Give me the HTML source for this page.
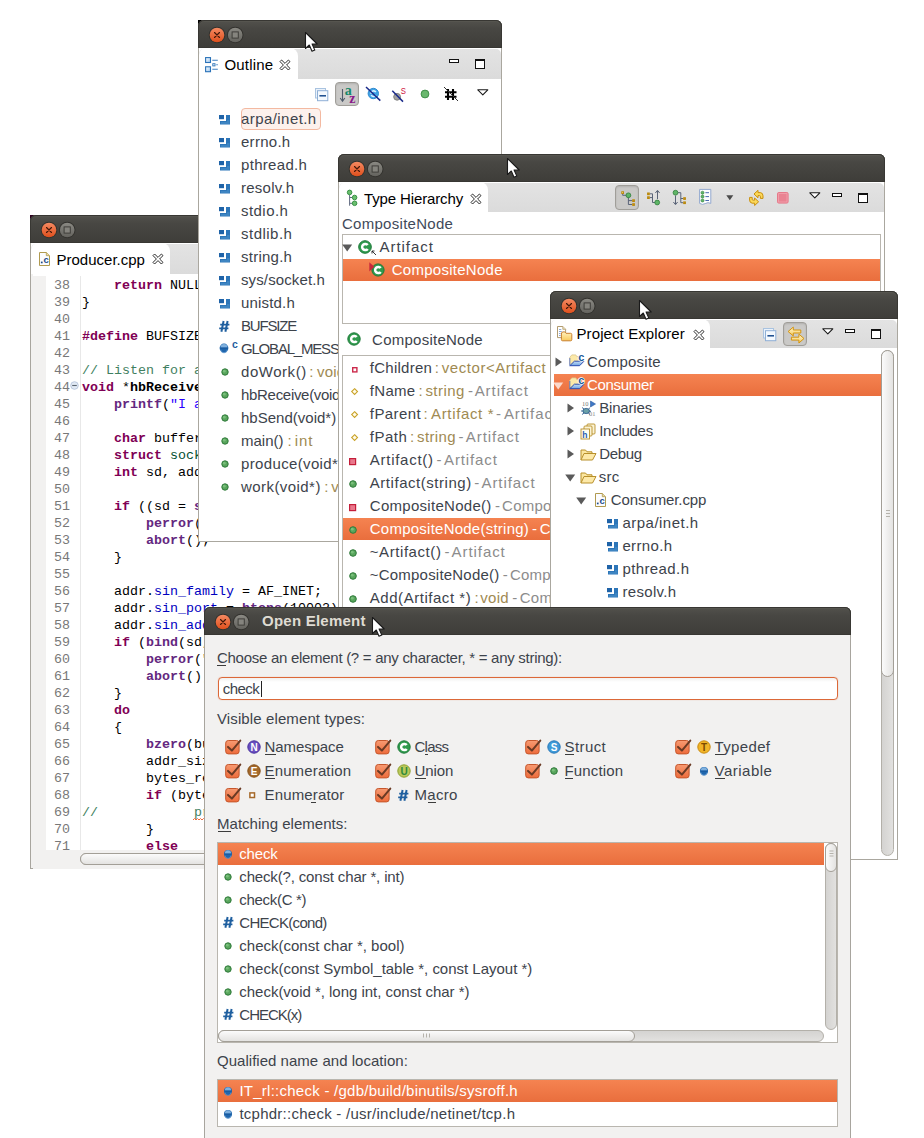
<!DOCTYPE html>
<html><head><meta charset="utf-8"><title>Eclipse CDT views</title><style>
html,body{margin:0;padding:0;background:#fff;}
body{width:924px;height:1138px;position:relative;overflow:hidden;font-family:"Liberation Sans", sans-serif;}
.win{position:absolute;overflow:hidden;}
.win span{position:absolute;white-space:pre;line-height:20px;height:20px;}
.win .ln{left:24px;width:16px;color:#787878;font-family:"Liberation Mono", monospace;font-size:13.33px;line-height:17px;height:17px;text-align:right;}
.win .cl{left:52px;color:#000;font-family:"Liberation Mono", monospace;font-size:13.33px;line-height:17px;height:17px;}
.win .cl b{font-family:"Liberation Mono", monospace;}
svg{display:block;overflow:visible;}
</style></head><body>
<div class="win" style="left:30px;top:215px;width:480px;height:654px;background:#fff;"><div style="position:absolute;left:0px;top:0px;width:6px;height:6px;background:#2c001e;"></div>
<div style="position:absolute;left:0px;top:0px;width:480px;height:28px;background:linear-gradient(#53524d,#484743 30%,#3e3d39);border-radius:6px 6px 0 0;box-shadow:inset 0 0 0 1px #383733, inset 0 2px 0 #56554f;"></div>
<svg style="position:absolute;left:10.4px;top:5.6px;" width="37" height="18" viewBox="0 0 37 18"><defs><linearGradient id="gc" x1="0" y1="0" x2="0" y2="1"><stop offset="0" stop-color="#f58a62"/><stop offset="1" stop-color="#df4f1c"/></linearGradient><linearGradient id="gm" x1="0" y1="0" x2="0" y2="1"><stop offset="0" stop-color="#8a8983"/><stop offset="1" stop-color="#64635e"/></linearGradient></defs><circle cx="9" cy="9" r="8.3" fill="#33322e"/><circle cx="9" cy="9" r="7.3" fill="url(#gc)"/><path d="M6.5 6.5 L11.5 11.5 M11.5 6.5 L6.5 11.5" stroke="#42180a" stroke-width="1.15" stroke-linecap="round"/><circle cx="27.2" cy="9" r="8.3" fill="#33322e"/><circle cx="27.2" cy="9" r="7.3" fill="url(#gm)"/><rect x="24.1" y="5.9" width="6.2" height="6.2" fill="#85847e" stroke="#3f3e3a" stroke-width="1"/></svg>
<div style="position:absolute;left:0px;top:28px;width:480px;height:626px;background:#f2f1f0;border:1px solid #a8a59e;border-top:none;box-sizing:border-box;"></div>
<div style="position:absolute;left:1px;top:28px;width:478px;height:31px;background:#fff;"></div>
<div style="position:absolute;left:1px;top:29px;width:478px;height:30px;background:linear-gradient(#e3e3e3,#dbdbdb);border-radius:5px 5px 0 0;"></div>
<div style="position:absolute;left:1px;top:28px;width:139px;height:31px;background:#fff;border-radius:7px 8px 0 0;"></div>
<svg style="position:absolute;left:9px;top:36.5px;" width="11" height="14" viewBox="0 0 11 14"><path d="M0.5 0.5 H7.3 L10.5 3.7 V13.5 H0.5 Z" fill="#fbfcff" stroke="#b09a50" stroke-width="1"/><path d="M7.3 0.5 V3.7 H10.5" fill="#e9d9a0" stroke="#b09a50" stroke-width=".8"/><text x="4.6" y="11.3" font-family='"Liberation Sans",sans-serif' font-weight="bold" font-size="9.5" fill="#1a4a8a">c</text><rect x="1.9" y="9.6" width="1.7" height="1.7" fill="#1a4a8a"/></svg>
<span style="left:26.50px;top:35.00px;color:#000;font-size:15px;letter-spacing:0.001px;">Producer.cpp</span>
<svg style="position:absolute;left:122.2px;top:38px;" width="12" height="12" viewBox="0 0 12 12"><path d="M1 2.6 L2.6 1 L6 4.4 L9.4 1 L11 2.6 L7.6 6 L11 9.4 L9.4 11 L6 7.6 L2.6 11 L1 9.4 L4.4 6 Z" fill="#fff" stroke="#2b2b2b" stroke-width="1" stroke-linejoin="round"/></svg>
<div style="position:absolute;left:3px;top:59px;width:475px;height:576px;background:#fff;"></div>
<div style="position:absolute;left:3px;top:61px;width:13px;height:574px;background:#f2f1f0;"></div>
<div style="position:absolute;left:49.5px;top:61px;width:1px;height:574px;background:#e8e8e8;"></div>
<span class="ln" style="top:61.6px">38</span><span class="cl" style="top:61.6px">    <b style="color:#7f0055;font-weight:bold">return</b><b style="color:#000;font-weight:normal"> NULL;</b></span>
<span class="ln" style="top:78.6px">39</span><span class="cl" style="top:78.6px"><b style="color:#000;font-weight:normal">}</b></span>
<span class="ln" style="top:95.6px">40</span><span class="cl" style="top:95.6px"></span>
<span class="ln" style="top:112.6px">41</span><span class="cl" style="top:112.6px"><b style="color:#7f0055;font-weight:bold">#define</b><b style="color:#000;font-weight:normal"> BUFSIZE 1024</b></span>
<span class="ln" style="top:129.6px">42</span><span class="cl" style="top:129.6px"></span>
<span class="ln" style="top:146.6px">43</span><span class="cl" style="top:146.6px"><b style="color:#3f7f5f;font-weight:normal">// Listen for a heartbeat from the consumer</b></span>
<span class="ln" style="top:163.6px">44</span><span class="cl" style="top:163.6px"><b style="color:#7f0055;font-weight:bold">void</b><b style="color:#000;font-weight:normal"> *</b><b style="color:#000;font-weight:bold">hbReceive</b><b style="color:#000;font-weight:normal">(void *arg) {</b></span>
<span class="ln" style="top:180.6px">45</span><span class="cl" style="top:180.6px">    <b style="color:#642880;font-weight:bold">printf</b><b style="color:#000;font-weight:normal">(</b><b style="color:#2a00ff;font-weight:normal">&quot;I am listening&quot;</b></span>
<span class="ln" style="top:197.6px">46</span><span class="cl" style="top:197.6px"></span>
<span class="ln" style="top:214.6px">47</span><span class="cl" style="top:214.6px">    <b style="color:#7f0055;font-weight:bold">char</b><b style="color:#000;font-weight:normal"> buffer[BUFSIZE];</b></span>
<span class="ln" style="top:231.6px">48</span><span class="cl" style="top:231.6px">    <b style="color:#7f0055;font-weight:bold">struct</b> <b style="color:#005032;font-weight:normal">sockaddr_in</b><b style="color:#000;font-weight:normal"> addr;</b></span>
<span class="ln" style="top:248.6px">49</span><span class="cl" style="top:248.6px">    <b style="color:#7f0055;font-weight:bold">int</b><b style="color:#000;font-weight:normal"> sd, addr_size, bytes_read;</b></span>
<span class="ln" style="top:265.6px">50</span><span class="cl" style="top:265.6px"></span>
<span class="ln" style="top:282.6px">51</span><span class="cl" style="top:282.6px">    <b style="color:#7f0055;font-weight:bold">if</b><b style="color:#000;font-weight:normal"> ((sd = </b><b style="color:#642880;font-weight:bold">socket</b><b style="color:#000;font-weight:normal">(PF_INET</b></span>
<span class="ln" style="top:299.6px">52</span><span class="cl" style="top:299.6px">        <b style="color:#642880;font-weight:bold">perror</b><b style="color:#000;font-weight:normal">(&quot;Socket&quot;);</b></span>
<span class="ln" style="top:316.6px">53</span><span class="cl" style="top:316.6px">        <b style="color:#642880;font-weight:bold">abort</b><b style="color:#000;font-weight:normal">();</b></span>
<span class="ln" style="top:333.6px">54</span><span class="cl" style="top:333.6px"><b style="color:#000;font-weight:normal">    }</b></span>
<span class="ln" style="top:350.6px">55</span><span class="cl" style="top:350.6px"></span>
<span class="ln" style="top:367.6px">56</span><span class="cl" style="top:367.6px"><b style="color:#000;font-weight:normal">    addr.</b><b style="color:#0000c0;font-weight:normal">sin_family</b><b style="color:#000;font-weight:normal"> = AF_INET;</b></span>
<span class="ln" style="top:384.6px">57</span><span class="cl" style="top:384.6px"><b style="color:#000;font-weight:normal">    addr.</b><b style="color:#0000c0;font-weight:normal">sin_port</b><b style="color:#000;font-weight:normal"> = </b><b style="color:#642880;font-weight:bold">htons</b><b style="color:#000;font-weight:normal">(10002);</b></span>
<span class="ln" style="top:401.6px">58</span><span class="cl" style="top:401.6px"><b style="color:#000;font-weight:normal">    addr.</b><b style="color:#0000c0;font-weight:normal">sin_addr</b><b style="color:#000;font-weight:normal">.s_addr = INADDR_ANY;</b></span>
<span class="ln" style="top:418.6px">59</span><span class="cl" style="top:418.6px">    <b style="color:#7f0055;font-weight:bold">if</b><b style="color:#000;font-weight:normal"> (</b><b style="color:#642880;font-weight:bold">bind</b><b style="color:#000;font-weight:normal">(sd, (struct</b></span>
<span class="ln" style="top:435.6px">60</span><span class="cl" style="top:435.6px">        <b style="color:#642880;font-weight:bold">perror</b><b style="color:#000;font-weight:normal">(&quot;Bind&quot;);</b></span>
<span class="ln" style="top:452.6px">61</span><span class="cl" style="top:452.6px">        <b style="color:#642880;font-weight:bold">abort</b><b style="color:#000;font-weight:normal">();</b></span>
<span class="ln" style="top:469.6px">62</span><span class="cl" style="top:469.6px"><b style="color:#000;font-weight:normal">    }</b></span>
<span class="ln" style="top:486.6px">63</span><span class="cl" style="top:486.6px">    <b style="color:#7f0055;font-weight:bold">do</b></span>
<span class="ln" style="top:503.6px">64</span><span class="cl" style="top:503.6px"><b style="color:#000;font-weight:normal">    {</b></span>
<span class="ln" style="top:520.6px">65</span><span class="cl" style="top:520.6px">        <b style="color:#642880;font-weight:bold">bzero</b><b style="color:#000;font-weight:normal">(buffer, BUFSIZE);</b></span>
<span class="ln" style="top:537.6px">66</span><span class="cl" style="top:537.6px"><b style="color:#000;font-weight:normal">        addr_size = sizeof(addr);</b></span>
<span class="ln" style="top:554.6px">67</span><span class="cl" style="top:554.6px"><b style="color:#000;font-weight:normal">        bytes_read = recvfrom</b></span>
<span class="ln" style="top:571.6px">68</span><span class="cl" style="top:571.6px">        <b style="color:#7f0055;font-weight:bold">if</b><b style="color:#000;font-weight:normal"> (bytes_read &gt; 0) {</b></span>
<span class="ln" style="top:588.6px">69</span><span class="cl" style="top:588.6px"><b style="color:#3f7f5f;font-weight:normal">//            printf</b></span>
<span class="ln" style="top:605.6px">70</span><span class="cl" style="top:605.6px"><b style="color:#000;font-weight:normal">        }</b></span>
<span class="ln" style="top:622.6px">71</span><span class="cl" style="top:622.6px">        <b style="color:#7f0055;font-weight:bold">else</b></span>
<svg style="position:absolute;left:40px;top:165.9px;" width="9" height="9" viewBox="0 0 9 9"><circle cx="4.5" cy="4.5" r="3.8" fill="#e1e9f4" stroke="#bccadf" stroke-width="1"/><path d="M2.2 4.5 H6.8" stroke="#5a6470" stroke-width="1.1"/></svg>
<svg style="position:absolute;left:163px;top:603px;" width="12" height="3" viewBox="0 0 12 3"><path d="M0 2 L1.5 0.5 L3 2 L4.5 0.5 L6 2 L7.5 0.5 L9 2 L10.5 0.5 L12 2" fill="none" stroke="#ef6a3a" stroke-width="1"/></svg>
<div style="position:absolute;left:3px;top:634.5px;width:475px;height:19px;background:#f2f1f0;"></div>
<div style="position:absolute;left:50px;top:638px;width:420px;height:12px;background:linear-gradient(#d4d3d1,#e2e1df);border:1px solid #b3b0a9;border-radius:7px;box-sizing:border-box;"></div>
<div style="position:absolute;left:50px;top:638px;width:300px;height:12px;background:linear-gradient(#fbfbfb,#e4e3e1);border:1px solid #a39f97;border-radius:7px;box-sizing:border-box;"></div></div>
<div class="win" style="left:198px;top:20px;width:304px;height:522px;background:#fff;"><div style="position:absolute;left:0px;top:0px;width:6px;height:6px;background:#000;"></div>
<div style="position:absolute;left:0px;top:0px;width:304px;height:28px;background:linear-gradient(#53524d,#484743 30%,#3e3d39);border-radius:6px 6px 0 0;box-shadow:inset 0 0 0 1px #383733, inset 0 2px 0 #56554f;"></div>
<svg style="position:absolute;left:10.4px;top:5.6px;" width="37" height="18" viewBox="0 0 37 18"><defs><linearGradient id="gc" x1="0" y1="0" x2="0" y2="1"><stop offset="0" stop-color="#f58a62"/><stop offset="1" stop-color="#df4f1c"/></linearGradient><linearGradient id="gm" x1="0" y1="0" x2="0" y2="1"><stop offset="0" stop-color="#8a8983"/><stop offset="1" stop-color="#64635e"/></linearGradient></defs><circle cx="9" cy="9" r="8.3" fill="#33322e"/><circle cx="9" cy="9" r="7.3" fill="url(#gc)"/><path d="M6.5 6.5 L11.5 11.5 M11.5 6.5 L6.5 11.5" stroke="#42180a" stroke-width="1.15" stroke-linecap="round"/><circle cx="27.2" cy="9" r="8.3" fill="#33322e"/><circle cx="27.2" cy="9" r="7.3" fill="url(#gm)"/><rect x="24.1" y="5.9" width="6.2" height="6.2" fill="#85847e" stroke="#3f3e3a" stroke-width="1"/></svg>
<div style="position:absolute;left:0px;top:28px;width:304px;height:494px;background:#fff;border:1px solid #aaa79f;border-top:none;box-sizing:border-box;"></div>
<div style="position:absolute;left:1px;top:28px;width:301.5px;height:30.5px;background:#fff;"></div>
<div style="position:absolute;left:1px;top:29px;width:301.5px;height:29.5px;background:linear-gradient(#e3e3e3,#dbdbdb);border-radius:5px 5px 0 0;"></div>
<div style="position:absolute;left:1px;top:28px;width:98.5px;height:30.5px;background:#fff;border-radius:7px 8px 0 0;"></div>
<svg style="position:absolute;left:105.6px;top:10.8px;" width="16" height="23" viewBox="0 0 16 23"><path d="M1.5 1.5 L1.5 17.5 L5.3 14 L8 20.3 L10.8 19.1 L8.1 13 L13.2 13 Z" fill="#fff" stroke="#1a1a1a" stroke-width="1.1" stroke-linejoin="round"/></svg>
<svg style="position:absolute;left:7px;top:37px;" width="13" height="15" viewBox="0 0 13 15"><defs><linearGradient id="ob" x1="0" y1="0" x2="1" y2="1"><stop offset="0" stop-color="#fff"/><stop offset="1" stop-color="#9cc6ee"/></linearGradient></defs><rect x="0.6" y="0.6" width="4.9" height="4.9" fill="url(#ob)" stroke="#2a72b8" stroke-width="1.1"/><rect x="0.6" y="9.8" width="4.9" height="4.9" fill="url(#ob)" stroke="#2a72b8" stroke-width="1.1"/><rect x="7.8" y="6.7" width="2.2" height="2.2" fill="#fff" stroke="#2a72b8" stroke-width=".9"/><path d="M7.3 3.2 H12.8 M11.3 7.8 H12.8 M7.3 12.3 H12.8" stroke="#3f7fc0" stroke-width="1.1"/></svg>
<span style="left:26.50px;top:34.60px;color:#000;font-size:15px;letter-spacing:0.161px;">Outline</span>
<svg style="position:absolute;left:81px;top:38.5px;" width="12" height="12" viewBox="0 0 12 12"><path d="M1 2.6 L2.6 1 L6 4.4 L9.4 1 L11 2.6 L7.6 6 L11 9.4 L9.4 11 L6 7.6 L2.6 11 L1 9.4 L4.4 6 Z" fill="#fff" stroke="#2b2b2b" stroke-width="1" stroke-linejoin="round"/></svg>
<div style="position:absolute;left:251px;top:39px;width:10px;height:4px;background:#fff;border:1px solid #111;box-sizing:border-box;"></div>
<div style="position:absolute;left:277px;top:39px;width:10px;height:10px;background:#fff;border:1px solid #111;border-top-width:2px;box-sizing:border-box;"></div>
<svg style="position:absolute;left:117px;top:68px;" width="14" height="14" viewBox="0 0 14 14"><rect x="0.5" y="0.5" width="10" height="9.5" fill="#eaf2fb" stroke="#a9c3e0"/><rect x="2.5" y="2.7" width="10.3" height="10" fill="#f4f9fe" stroke="#8fb0d6"/><path d="M4.4 7.8 H11" stroke="#17498c" stroke-width="1.5"/></svg>
<div style="position:absolute;left:137px;top:62px;width:24px;height:24px;background:#cac9c7;border:1px solid #a09e99;border-radius:4px;box-sizing:border-box;box-shadow:inset 0 1px 2px rgba(0,0,0,.12);"></div>
<svg style="position:absolute;left:141px;top:65px;" width="18" height="18" viewBox="0 0 18 18"><path d="M3.5 4 V16 M1.2 13 L3.5 16.2 L5.8 13" fill="none" stroke="#4f5b6b" stroke-width="1.1"/><text x="5.8" y="9.6" font-family='"Liberation Serif",serif' font-weight="bold" font-size="14" fill="#15876a">a</text><text x="10.2" y="17.7" font-family='"Liberation Serif",serif' font-weight="bold" font-size="14" fill="#8a1a8a">z</text></svg>
<svg style="position:absolute;left:167px;top:66px;" width="17" height="16" viewBox="0 0 17 16"><circle cx="8.3" cy="7.5" r="5.2" fill="#3fa2e4" stroke="#2f8ad0"/><path d="M6 7.8 A2.6 2.6 0 0 1 10.8 6.2 M10.8 9 A2.6 2.6 0 0 1 6.2 9.2" fill="none" stroke="#d8eeff" stroke-width="1.6"/><path d="M1 1 L15.3 14.6" stroke="#1a2a8a" stroke-width="1.5"/></svg>
<svg style="position:absolute;left:193px;top:64px;" width="17" height="19" viewBox="0 0 17 19"><circle cx="6.1" cy="12.8" r="3.4" fill="#a2a2a2" stroke="#808080"/><path d="M1.3 6.8 L12 17.6" stroke="#1a2a8a" stroke-width="1.5"/><text x="12" y="9.6" transform="scale(.82 1)" font-family='"Liberation Sans",sans-serif' font-size="9.5" fill="#d0103a">S</text></svg>
<svg style="position:absolute;left:221px;top:68px;" width="12" height="12" viewBox="0 0 12 12"><circle cx="6" cy="6" r="3.9" fill="#6ab86e" stroke="#3f8f48" stroke-width="1"/></svg>
<svg style="position:absolute;left:245px;top:66px;" width="16" height="16" viewBox="0 0 16 16"><path d="M5 3 V14 M10 3 V14 M2 6.2 H13.5 M2 10.8 H13.5" stroke="#000" stroke-width="2.1"/><path d="M1 1 L15 15" stroke="#333" stroke-width="1"/></svg>
<svg style="position:absolute;left:279px;top:68.5px;" width="12" height="7" viewBox="0 0 12 7"><path d="M0.8 0.8 L10.8 0.8 L5.8 5.8 Z" fill="#fff" stroke="#1a1a1a" stroke-width="1.1" stroke-linejoin="round"/></svg>
<div style="position:absolute;left:42.5px;top:87.5px;width:80.5px;height:22.5px;background:#fdf1ec;border:1px solid #f3b9a1;border-radius:4px;box-sizing:border-box;"></div>
<svg style="position:absolute;left:21.2px;top:94.5px;" width="11" height="10" viewBox="0 0 11 10"><rect x="0" y="0" width="5" height="4.2" fill="#1f63a8"/><path d="M7 0 H11 V9.6 H1 V6 H7 Z" fill="#2d76b9"/><path d="M8 5 H10.5 V9 H2 V7 H8Z" fill="#4f93cc" opacity=".5"/></svg>
<span style="left:43.00px;top:88.50px;color:#3d434b;font-size:15px;letter-spacing:0.431px;">arpa/inet.h</span>
<svg style="position:absolute;left:21.2px;top:117.5px;" width="11" height="10" viewBox="0 0 11 10"><rect x="0" y="0" width="5" height="4.2" fill="#1f63a8"/><path d="M7 0 H11 V9.6 H1 V6 H7 Z" fill="#2d76b9"/><path d="M8 5 H10.5 V9 H2 V7 H8Z" fill="#4f93cc" opacity=".5"/></svg>
<span style="left:43.00px;top:111.50px;color:#3d434b;font-size:15px;letter-spacing:0.278px;">errno.h</span>
<svg style="position:absolute;left:21.2px;top:140.5px;" width="11" height="10" viewBox="0 0 11 10"><rect x="0" y="0" width="5" height="4.2" fill="#1f63a8"/><path d="M7 0 H11 V9.6 H1 V6 H7 Z" fill="#2d76b9"/><path d="M8 5 H10.5 V9 H2 V7 H8Z" fill="#4f93cc" opacity=".5"/></svg>
<span style="left:43.00px;top:134.50px;color:#3d434b;font-size:15px;letter-spacing:0.314px;">pthread.h</span>
<svg style="position:absolute;left:21.2px;top:163.5px;" width="11" height="10" viewBox="0 0 11 10"><rect x="0" y="0" width="5" height="4.2" fill="#1f63a8"/><path d="M7 0 H11 V9.6 H1 V6 H7 Z" fill="#2d76b9"/><path d="M8 5 H10.5 V9 H2 V7 H8Z" fill="#4f93cc" opacity=".5"/></svg>
<span style="left:43.00px;top:157.50px;color:#3d434b;font-size:15px;letter-spacing:0.254px;">resolv.h</span>
<svg style="position:absolute;left:21.2px;top:186.5px;" width="11" height="10" viewBox="0 0 11 10"><rect x="0" y="0" width="5" height="4.2" fill="#1f63a8"/><path d="M7 0 H11 V9.6 H1 V6 H7 Z" fill="#2d76b9"/><path d="M8 5 H10.5 V9 H2 V7 H8Z" fill="#4f93cc" opacity=".5"/></svg>
<span style="left:43.00px;top:180.50px;color:#3d434b;font-size:15px;letter-spacing:0.449px;">stdio.h</span>
<svg style="position:absolute;left:21.2px;top:209.5px;" width="11" height="10" viewBox="0 0 11 10"><rect x="0" y="0" width="5" height="4.2" fill="#1f63a8"/><path d="M7 0 H11 V9.6 H1 V6 H7 Z" fill="#2d76b9"/><path d="M8 5 H10.5 V9 H2 V7 H8Z" fill="#4f93cc" opacity=".5"/></svg>
<span style="left:43.00px;top:203.50px;color:#3d434b;font-size:15px;letter-spacing:0.481px;">stdlib.h</span>
<svg style="position:absolute;left:21.2px;top:232.5px;" width="11" height="10" viewBox="0 0 11 10"><rect x="0" y="0" width="5" height="4.2" fill="#1f63a8"/><path d="M7 0 H11 V9.6 H1 V6 H7 Z" fill="#2d76b9"/><path d="M8 5 H10.5 V9 H2 V7 H8Z" fill="#4f93cc" opacity=".5"/></svg>
<span style="left:43.00px;top:226.50px;color:#3d434b;font-size:15px;letter-spacing:0.242px;">string.h</span>
<svg style="position:absolute;left:21.2px;top:255.5px;" width="11" height="10" viewBox="0 0 11 10"><rect x="0" y="0" width="5" height="4.2" fill="#1f63a8"/><path d="M7 0 H11 V9.6 H1 V6 H7 Z" fill="#2d76b9"/><path d="M8 5 H10.5 V9 H2 V7 H8Z" fill="#4f93cc" opacity=".5"/></svg>
<span style="left:43.00px;top:249.50px;color:#3d434b;font-size:15px;letter-spacing:0.115px;">sys/socket.h</span>
<svg style="position:absolute;left:21.2px;top:278.5px;" width="11" height="10" viewBox="0 0 11 10"><rect x="0" y="0" width="5" height="4.2" fill="#1f63a8"/><path d="M7 0 H11 V9.6 H1 V6 H7 Z" fill="#2d76b9"/><path d="M8 5 H10.5 V9 H2 V7 H8Z" fill="#4f93cc" opacity=".5"/></svg>
<span style="left:43.00px;top:272.50px;color:#3d434b;font-size:15px;letter-spacing:0.179px;">unistd.h</span>
<svg style="position:absolute;left:21px;top:301.4px;" width="11" height="11" viewBox="0 0 11 11"><path d="M4.6 0 L2.4 10.8 M8.6 0 L6.4 10.8" stroke="#1f5f9f" stroke-width="2"/><path d="M1.2 3.7 H10.4 M0.2 7.3 H9.4" stroke="#1f5f9f" stroke-width="1.8"/></svg>
<span style="left:43.00px;top:295.50px;color:#3d434b;font-size:15px;letter-spacing:-1.200px;">BUFSIZE</span>
<svg style="position:absolute;left:20.6px;top:323.4px;" width="10" height="10" viewBox="0 0 10 10"><circle cx="5" cy="5" r="4.4" fill="#1f66ad"/><path d="M1.4999999999999996 4.4 A3.5000000000000004 3.5000000000000004 0 0 1 8.5 4.4 Z" fill="#7fb0de"/><path d="M1.1999999999999997 5.2 H8.8" stroke="#1a5a9e" stroke-width="1.1"/><path d="M1.7999999999999996 6.6 A3.2 3.2 0 0 0 8.200000000000001 6.6" fill="none" stroke="#4f8cc8" stroke-width=".9"/></svg>
<span style="left:34.10px;top:313.76px;color:#1f5f9f;font-size:10.5px;font-weight:bold;">c</span>
<span style="left:43.00px;top:318.50px;color:#3d434b;font-size:15px;letter-spacing:-1.200px;">GLOBAL_MESSAGE</span>
<svg style="position:absolute;left:21.5px;top:347.3px;" width="10" height="10" viewBox="0 0 10 10"><circle cx="5" cy="5" r="3.2" fill="#58a55c" stroke="#2f7a3a" stroke-width="1"/><circle cx="4.3" cy="4.2" r="1.4" fill="#8fd08f" opacity=".6"/></svg>
<span style="left:43.00px;top:341.50px;color:#3d434b;font-size:15px;letter-spacing:0.542px;">doWork()</span>
<span style="left:111.20px;top:341.50px;color:#a08a52;font-size:15px;letter-spacing:-0.672px;">:</span>
<span style="left:119.00px;top:341.50px;color:#a08a52;font-size:15px;letter-spacing:0.223px;">void</span>
<svg style="position:absolute;left:21.5px;top:370.3px;" width="10" height="10" viewBox="0 0 10 10"><circle cx="5" cy="5" r="3.2" fill="#58a55c" stroke="#2f7a3a" stroke-width="1"/><circle cx="4.3" cy="4.2" r="1.4" fill="#8fd08f" opacity=".6"/></svg>
<span style="left:43.00px;top:364.50px;color:#3d434b;font-size:15px;letter-spacing:-0.302px;">hbReceive(void*)</span>
<svg style="position:absolute;left:21.5px;top:393.3px;" width="10" height="10" viewBox="0 0 10 10"><circle cx="5" cy="5" r="3.2" fill="#58a55c" stroke="#2f7a3a" stroke-width="1"/><circle cx="4.3" cy="4.2" r="1.4" fill="#8fd08f" opacity=".6"/></svg>
<span style="left:43.00px;top:387.50px;color:#3d434b;font-size:15px;letter-spacing:0.011px;">hbSend(void*)</span>
<svg style="position:absolute;left:21.5px;top:416.3px;" width="10" height="10" viewBox="0 0 10 10"><circle cx="5" cy="5" r="3.2" fill="#58a55c" stroke="#2f7a3a" stroke-width="1"/><circle cx="4.3" cy="4.2" r="1.4" fill="#8fd08f" opacity=".6"/></svg>
<span style="left:43.00px;top:410.50px;color:#3d434b;font-size:15px;letter-spacing:0.017px;">main()</span>
<span style="left:89.50px;top:410.50px;color:#a08a52;font-size:15px;letter-spacing:-0.772px;">:</span>
<span style="left:96.80px;top:410.50px;color:#a08a52;font-size:15px;letter-spacing:0.878px;">int</span>
<svg style="position:absolute;left:21.5px;top:439.3px;" width="10" height="10" viewBox="0 0 10 10"><circle cx="5" cy="5" r="3.2" fill="#58a55c" stroke="#2f7a3a" stroke-width="1"/><circle cx="4.3" cy="4.2" r="1.4" fill="#8fd08f" opacity=".6"/></svg>
<span style="left:43.00px;top:433.50px;color:#3d434b;font-size:15px;letter-spacing:0.357px;">produce(void*)</span>
<svg style="position:absolute;left:21.5px;top:462.3px;" width="10" height="10" viewBox="0 0 10 10"><circle cx="5" cy="5" r="3.2" fill="#58a55c" stroke="#2f7a3a" stroke-width="1"/><circle cx="4.3" cy="4.2" r="1.4" fill="#8fd08f" opacity=".6"/></svg>
<span style="left:43.00px;top:456.50px;color:#3d434b;font-size:15px;letter-spacing:0.438px;">work(void*)</span>
<span style="left:126.20px;top:456.50px;color:#a08a52;font-size:15px;letter-spacing:-0.772px;">:</span>
<span style="left:133.20px;top:456.50px;color:#a08a52;font-size:15px;letter-spacing:0.223px;">void</span></div>
<div class="win" style="left:338px;top:154px;width:547px;height:520px;background:#fff;"><div style="position:absolute;left:0px;top:0px;width:547px;height:28px;background:linear-gradient(#53524d,#484743 30%,#3e3d39);border-radius:6px 6px 0 0;box-shadow:inset 0 0 0 1px #383733, inset 0 2px 0 #56554f;"></div>
<svg style="position:absolute;left:10.4px;top:5.6px;" width="37" height="18" viewBox="0 0 37 18"><defs><linearGradient id="gc" x1="0" y1="0" x2="0" y2="1"><stop offset="0" stop-color="#f58a62"/><stop offset="1" stop-color="#df4f1c"/></linearGradient><linearGradient id="gm" x1="0" y1="0" x2="0" y2="1"><stop offset="0" stop-color="#8a8983"/><stop offset="1" stop-color="#64635e"/></linearGradient></defs><circle cx="9" cy="9" r="8.3" fill="#33322e"/><circle cx="9" cy="9" r="7.3" fill="url(#gc)"/><path d="M6.5 6.5 L11.5 11.5 M11.5 6.5 L6.5 11.5" stroke="#42180a" stroke-width="1.15" stroke-linecap="round"/><circle cx="27.2" cy="9" r="8.3" fill="#33322e"/><circle cx="27.2" cy="9" r="7.3" fill="url(#gm)"/><rect x="24.1" y="5.9" width="6.2" height="6.2" fill="#85847e" stroke="#3f3e3a" stroke-width="1"/></svg>
<div style="position:absolute;left:0px;top:28px;width:547px;height:492px;background:#fff;border:1px solid #aaa79f;border-top:none;box-sizing:border-box;"></div>
<div style="position:absolute;left:1px;top:28px;width:544.5px;height:30px;background:#fff;"></div>
<div style="position:absolute;left:1px;top:29px;width:544.5px;height:29px;background:linear-gradient(#e3e3e3,#dbdbdb);border-radius:5px 5px 0 0;"></div>
<div style="position:absolute;left:1px;top:28px;width:148.5px;height:30px;background:#fff;border-radius:7px 8px 0 0;"></div>
<svg style="position:absolute;left:167.7px;top:2.7px;" width="16" height="23" viewBox="0 0 16 23"><path d="M1.5 1.5 L1.5 17.5 L5.3 14 L8 20.3 L10.8 19.1 L8.1 13 L13.2 13 Z" fill="#fff" stroke="#1a1a1a" stroke-width="1.1" stroke-linejoin="round"/></svg>
<svg style="position:absolute;left:8px;top:35px;" width="12" height="18" viewBox="0 0 12 18"><path d="M3.6 5.5 V16.7 M3.6 8.5 H6.5 M3.6 14.3 H6.5" stroke="#606a80" stroke-width="1" fill="none"/><circle cx="3.6" cy="3.4" r="2.3" fill="#6abf6e" stroke="#2e8a3c" stroke-width=".9"/><circle cx="8.6" cy="8.5" r="2.3" fill="#6abf6e" stroke="#2e8a3c" stroke-width=".9"/><circle cx="8.6" cy="14.3" r="2.3" fill="#6abf6e" stroke="#2e8a3c" stroke-width=".9"/></svg>
<span style="left:26.00px;top:34.90px;color:#000;font-size:15px;letter-spacing:-0.129px;">Type Hierarchy</span>
<svg style="position:absolute;left:132px;top:38.5px;" width="12" height="12" viewBox="0 0 12 12"><path d="M1 2.6 L2.6 1 L6 4.4 L9.4 1 L11 2.6 L7.6 6 L11 9.4 L9.4 11 L6 7.6 L2.6 11 L1 9.4 L4.4 6 Z" fill="#fff" stroke="#2b2b2b" stroke-width="1" stroke-linejoin="round"/></svg>
<div style="position:absolute;left:277px;top:31px;width:24px;height:24.5px;background:#cac9c7;border:1px solid #a09e99;border-radius:4px;box-sizing:border-box;box-shadow:inset 0 1px 2px rgba(0,0,0,.12);"></div>
<svg style="position:absolute;left:282px;top:35px;" width="17" height="18" viewBox="0 0 17 18"><path d="M2.7 4.9 V6.3 H8.4 M8.4 8 V15.5 H12.2 M8.4 11.6 H12.2" fill="none" stroke="#5a6478" stroke-width="1"/><rect x="1.75" y="2.75" width="1.8" height="1.8" fill="#ffe680" stroke="#b8860b" stroke-width=".9"/><circle cx="8.4" cy="6.3" r="2.4" fill="#5fb567" stroke="#2e7d3a" stroke-width=".8"/><rect x="12.649999999999999" y="10.75" width="1.8" height="1.8" fill="#ffe680" stroke="#b8860b" stroke-width=".9"/><rect x="12.649999999999999" y="14.649999999999999" width="1.8" height="1.8" fill="#ffe680" stroke="#b8860b" stroke-width=".9"/></svg>
<svg style="position:absolute;left:308px;top:35px;" width="16" height="18" viewBox="0 0 16 18"><path d="M3.9 4.8 H6.5 V13.5 H9 M3.9 8.6 H6.5" fill="none" stroke="#5a6478" stroke-width="1"/><path d="M11.5 2 V10 M9.4 4 L11.5 1.3 L13.6 4" fill="none" stroke="#5a6478" stroke-width="1"/><rect x="1.55" y="3.95" width="1.8" height="1.8" fill="#ffe680" stroke="#b8860b" stroke-width=".9"/><rect x="1.55" y="7.75" width="1.8" height="1.8" fill="#ffe680" stroke="#b8860b" stroke-width=".9"/><circle cx="11.2" cy="13.5" r="2.4" fill="#5fb567" stroke="#2e7d3a" stroke-width=".8"/></svg>
<svg style="position:absolute;left:333px;top:35px;" width="16" height="18" viewBox="0 0 16 18"><path d="M4.5 6.5 V15 M2.4 13 L4.5 15.7 L6.6 13" fill="none" stroke="#5a6478" stroke-width="1"/><path d="M7 3.7 H9.8 V13.7 H12.2 M9.8 9.5 H12.2" fill="none" stroke="#5a6478" stroke-width="1"/><circle cx="4.5" cy="3.7" r="2.4" fill="#5fb567" stroke="#2e7d3a" stroke-width=".8"/><rect x="12.649999999999999" y="8.649999999999999" width="1.8" height="1.8" fill="#ffe680" stroke="#b8860b" stroke-width=".9"/><rect x="12.649999999999999" y="12.85" width="1.8" height="1.8" fill="#ffe680" stroke="#b8860b" stroke-width=".9"/></svg>
<svg style="position:absolute;left:361px;top:34px;" width="13" height="18" viewBox="0 0 13 18"><path d="M0.6 1.4 H11.8 V15.4 Q9 13.8 6.2 15.6 Q3.4 17.3 0.6 15.4 Z" fill="#fdfdff" stroke="#93a9cf" stroke-width="1"/><circle cx="3.5" cy="4.7" r="1.5" fill="#5fb567" stroke="#2e7d3a" stroke-width=".6"/><path d="M6.4 4.7 H10" stroke="#4a6ab0" stroke-width="1"/><circle cx="3.5" cy="8.6" r="1.5" fill="#5fb567" stroke="#2e7d3a" stroke-width=".6"/><path d="M6.4 8.6 H10" stroke="#4a6ab0" stroke-width="1"/><circle cx="3.5" cy="12.5" r="1.5" fill="#5fb567" stroke="#2e7d3a" stroke-width=".6"/><path d="M6.4 12.5 H10" stroke="#4a6ab0" stroke-width="1"/></svg>
<svg style="position:absolute;left:387.5px;top:40.5px;" width="8" height="6" viewBox="0 0 8 6"><path d="M0.3 0.3 L7.3 0.3 L3.8 5.3 Z" fill="#4b4b4b"/></svg>
<svg style="position:absolute;left:410px;top:34.5px;" width="17" height="18" viewBox="0 0 17 18"><path d="M6 5 L10 1.3 L10 3.6 L12.4 3.6 Q15 4 15 6.8 L15 9.4 L12.4 9.4 L12.4 7.4 Q12.4 6.6 11.4 6.6 L10 6.6 L10 8.8 Z" fill="#fbd85a" stroke="#c9900f" stroke-width="1" stroke-linejoin="round"/><path d="M6 5 L10 1.3 L10 3.6 L12.4 3.6 Q15 4 15 6.8 L15 9.4 L12.4 9.4 L12.4 7.4 Q12.4 6.6 11.4 6.6 L10 6.6 L10 8.8 Z" transform="rotate(180 8.3 8.9)" fill="#fbd85a" stroke="#c9900f" stroke-width="1" stroke-linejoin="round"/></svg>
<svg style="position:absolute;left:439px;top:37.7px;" width="12" height="12" viewBox="0 0 12 12"><rect x="0.5" y="0.5" width="10.6" height="10.6" rx="1.3" fill="#e98392" stroke="#e6798a"/><rect x="1.6" y="1.6" width="8.4" height="8.4" fill="none" stroke="#f2a4af" stroke-width=".8"/></svg>
<svg style="position:absolute;left:470.5px;top:37.5px;" width="12" height="7" viewBox="0 0 12 7"><path d="M0.8 0.8 L10.8 0.8 L5.8 5.8 Z" fill="#fff" stroke="#1a1a1a" stroke-width="1.1" stroke-linejoin="round"/></svg>
<div style="position:absolute;left:494px;top:39px;width:10px;height:4px;background:#fff;border:1px solid #111;box-sizing:border-box;"></div>
<div style="position:absolute;left:520px;top:39px;width:10px;height:10px;background:#fff;border:1px solid #111;border-top-width:2px;box-sizing:border-box;"></div>
<span style="left:4.00px;top:59.60px;color:#3f4a5a;font-size:15px;letter-spacing:0.278px;">CompositeNode</span>
<div style="position:absolute;left:4px;top:80px;width:539px;height:90px;background:#fff;border:1px solid #b9b6af;box-sizing:border-box;"></div>
<svg style="position:absolute;left:4.3px;top:89.5px;" width="11" height="8" viewBox="0 0 11 8"><path d="M0.2 0.4 L10.2 0.4 L5.2 7.5 Z" fill="#5a5a5a"/></svg>
<svg style="position:absolute;left:19.4px;top:84.8px;" width="16" height="16" viewBox="0 0 16 16"><circle cx="8" cy="8" r="6.3" fill="#2f9a4d" stroke="#1f7a3a" stroke-width="1"/><path d="M10.7 6.1 A3.1 3.1 0 1 0 10.7 9.9" fill="none" stroke="#fff" stroke-width="2.5"/></svg>
<svg style="position:absolute;left:33px;top:96px;" width="6" height="6" viewBox="0 0 6 6"><path d="M1 1 L5 5 M1 1 V3.5 M1 1 H3.5" stroke="#222" stroke-width=".9" fill="none"/></svg>
<span style="left:41.60px;top:82.90px;color:#3d434b;font-size:15px;letter-spacing:0.945px;">Artifact</span>
<div style="position:absolute;left:5px;top:105px;width:537px;height:22px;background:linear-gradient(#f58351,#e96e3d);"></div>
<svg style="position:absolute;left:32px;top:107.9px;" width="16" height="16" viewBox="0 0 16 16"><circle cx="8" cy="8" r="6.1" fill="#2f9a4d" stroke="#1f7a3a" stroke-width="1"/><path d="M10.7 6.1 A3.1 3.1 0 1 0 10.7 9.9" fill="none" stroke="#fff" stroke-width="2.5"/></svg>
<svg style="position:absolute;left:31px;top:108px;" width="7" height="10" viewBox="0 0 7 10"><path d="M0.3 0.2 L5.4 4.8 L0.3 9.4 Z" fill="#c8283c"/></svg>
<span style="left:53.70px;top:105.90px;color:#fff;font-size:15px;letter-spacing:0.270px;">CompositeNode</span>
<svg style="position:absolute;left:7.6px;top:176.5px;" width="16" height="16" viewBox="0 0 16 16"><circle cx="8" cy="8" r="6.2" fill="#2f9a4d" stroke="#1f7a3a" stroke-width="1"/><path d="M10.7 6.1 A3.1 3.1 0 1 0 10.7 9.9" fill="none" stroke="#fff" stroke-width="2.5"/></svg>
<span style="left:34.10px;top:176.00px;color:#3d434b;font-size:15px;letter-spacing:0.245px;">CompositeNode</span>
<div style="position:absolute;left:4px;top:200.5px;width:539px;height:300px;background:#fff;border:1px solid #b9b6af;box-sizing:border-box;"></div>
<svg style="position:absolute;left:13.6px;top:212.8px;" width="6" height="6" viewBox="0 0 6 6"><rect x="0.7" y="0.7" width="4.2" height="4.2" fill="#fff" stroke="#cc2a4c" stroke-width="1.4"/></svg>
<span style="left:31.80px;top:203.90px;color:#3d434b;font-size:15px;letter-spacing:0.259px;">fChildren</span>
<span style="left:96.80px;top:203.90px;color:#a08a52;font-size:15px;letter-spacing:-0.872px;">:</span>
<span style="left:103.80px;top:203.90px;color:#a08a52;font-size:15px;letter-spacing:0.549px;">vector&lt;Artifact *&gt;</span>
<svg style="position:absolute;left:13px;top:233.9px;" width="8" height="8" viewBox="0 0 8 8"><path d="M3.6 0.7 L6.5 3.6 L3.6 6.5 L0.7 3.6 Z" fill="#fffbe8" stroke="#c9a227" stroke-width="1.1"/></svg>
<span style="left:31.80px;top:226.90px;color:#3d434b;font-size:15px;letter-spacing:0.303px;">fName</span>
<span style="left:80.60px;top:226.90px;color:#a08a52;font-size:15px;letter-spacing:-0.872px;">:</span>
<span style="left:87.40px;top:226.90px;color:#a08a52;font-size:15px;letter-spacing:0.462px;">string</span>
<span style="left:130.00px;top:226.90px;color:#8c8c8c;font-size:15px;letter-spacing:-0.800px;">-</span>
<span style="left:136.70px;top:226.90px;color:#8c8c8c;font-size:15px;letter-spacing:0.930px;">Artifact</span>
<svg style="position:absolute;left:13px;top:256.9px;" width="8" height="8" viewBox="0 0 8 8"><path d="M3.6 0.7 L6.5 3.6 L3.6 6.5 L0.7 3.6 Z" fill="#fffbe8" stroke="#c9a227" stroke-width="1.1"/></svg>
<span style="left:31.80px;top:249.90px;color:#3d434b;font-size:15px;letter-spacing:0.421px;">fParent</span>
<span style="left:85.60px;top:249.90px;color:#a08a52;font-size:15px;letter-spacing:-0.872px;">:</span>
<span style="left:93.00px;top:249.90px;color:#a08a52;font-size:15px;letter-spacing:0.657px;">Artifact *</span>
<span style="left:158.00px;top:249.90px;color:#8c8c8c;font-size:15px;letter-spacing:0.000px;">-</span>
<span style="left:165.90px;top:249.90px;color:#8c8c8c;font-size:15px;letter-spacing:0.916px;">Artifact</span>
<svg style="position:absolute;left:13px;top:279.9px;" width="8" height="8" viewBox="0 0 8 8"><path d="M3.6 0.7 L6.5 3.6 L3.6 6.5 L0.7 3.6 Z" fill="#fffbe8" stroke="#c9a227" stroke-width="1.1"/></svg>
<span style="left:31.80px;top:272.90px;color:#3d434b;font-size:15px;letter-spacing:0.492px;">fPath</span>
<span style="left:72.10px;top:272.90px;color:#a08a52;font-size:15px;letter-spacing:-0.872px;">:</span>
<span style="left:79.10px;top:272.90px;color:#a08a52;font-size:15px;letter-spacing:0.342px;">string</span>
<span style="left:120.60px;top:272.90px;color:#8c8c8c;font-size:15px;letter-spacing:-0.300px;">-</span>
<span style="left:127.80px;top:272.90px;color:#8c8c8c;font-size:15px;letter-spacing:0.916px;">Artifact</span>
<svg style="position:absolute;left:11px;top:303.8px;" width="8" height="8" viewBox="0 0 8 8"><rect x="0.6" y="0.6" width="6" height="6" fill="#e9788c" stroke="#c41e3a" stroke-width="1.2"/></svg>
<span style="left:31.80px;top:295.90px;color:#3d434b;font-size:15px;letter-spacing:0.725px;">Artifact()</span>
<span style="left:98.60px;top:295.90px;color:#8c8c8c;font-size:15px;letter-spacing:-0.300px;">-</span>
<span style="left:106.00px;top:295.90px;color:#8c8c8c;font-size:15px;letter-spacing:0.887px;">Artifact</span>
<svg style="position:absolute;left:10.3px;top:325px;" width="10" height="10" viewBox="0 0 10 10"><circle cx="5" cy="5" r="3.3" fill="#58a55c" stroke="#2f7a3a" stroke-width="1"/><circle cx="4.3" cy="4.2" r="1.4" fill="#8fd08f" opacity=".6"/></svg>
<span style="left:31.80px;top:318.90px;color:#3d434b;font-size:15px;letter-spacing:0.536px;">Artifact(string)</span>
<span style="left:136.30px;top:318.90px;color:#8c8c8c;font-size:15px;letter-spacing:-0.300px;">-</span>
<span style="left:143.50px;top:318.90px;color:#8c8c8c;font-size:15px;letter-spacing:0.916px;">Artifact</span>
<svg style="position:absolute;left:11px;top:349.8px;" width="8" height="8" viewBox="0 0 8 8"><rect x="0.6" y="0.6" width="6" height="6" fill="#e9788c" stroke="#c41e3a" stroke-width="1.2"/></svg>
<span style="left:31.80px;top:341.90px;color:#3d434b;font-size:15px;letter-spacing:0.282px;">CompositeNode()</span>
<span style="left:156.90px;top:341.90px;color:#8c8c8c;font-size:15px;letter-spacing:-0.300px;">-</span>
<span style="left:164.10px;top:341.90px;color:#8c8c8c;font-size:15px;letter-spacing:0.211px;">CompositeNode</span>
<div style="position:absolute;left:5px;top:364px;width:537px;height:21.8px;background:linear-gradient(#f58351,#e96e3d);"></div>
<svg style="position:absolute;left:10.3px;top:371px;" width="10" height="10" viewBox="0 0 10 10"><circle cx="5" cy="5" r="3.3" fill="#58a55c" stroke="#2f7a3a" stroke-width="1"/><circle cx="4.3" cy="4.2" r="1.4" fill="#8fd08f" opacity=".6"/></svg>
<span style="left:31.80px;top:364.90px;color:#fff;font-size:15px;letter-spacing:0.238px;">CompositeNode(string)</span>
<span style="left:193.90px;top:364.90px;color:#fff;font-size:15px;letter-spacing:-0.100px;">-</span>
<span style="left:201.70px;top:364.90px;color:#fff;font-size:15px;letter-spacing:0.245px;">CompositeNode</span>
<svg style="position:absolute;left:10.3px;top:394px;" width="10" height="10" viewBox="0 0 10 10"><circle cx="5" cy="5" r="3.3" fill="#58a55c" stroke="#2f7a3a" stroke-width="1"/><circle cx="4.3" cy="4.2" r="1.4" fill="#8fd08f" opacity=".6"/></svg>
<span style="left:31.80px;top:387.90px;color:#3d434b;font-size:15px;letter-spacing:0.566px;">~Artifact()</span>
<span style="left:106.50px;top:387.90px;color:#8c8c8c;font-size:15px;letter-spacing:-0.300px;">-</span>
<span style="left:113.60px;top:387.90px;color:#8c8c8c;font-size:15px;letter-spacing:0.930px;">Artifact</span>
<svg style="position:absolute;left:10.3px;top:417px;" width="10" height="10" viewBox="0 0 10 10"><circle cx="5" cy="5" r="3.3" fill="#58a55c" stroke="#2f7a3a" stroke-width="1"/><circle cx="4.3" cy="4.2" r="1.4" fill="#8fd08f" opacity=".6"/></svg>
<span style="left:31.80px;top:410.90px;color:#3d434b;font-size:15px;letter-spacing:0.206px;">~CompositeNode()</span>
<span style="left:164.70px;top:410.90px;color:#8c8c8c;font-size:15px;letter-spacing:-0.300px;">-</span>
<span style="left:171.90px;top:410.90px;color:#8c8c8c;font-size:15px;letter-spacing:0.228px;">CompositeNode</span>
<svg style="position:absolute;left:10.3px;top:440px;" width="10" height="10" viewBox="0 0 10 10"><circle cx="5" cy="5" r="3.3" fill="#58a55c" stroke="#2f7a3a" stroke-width="1"/><circle cx="4.3" cy="4.2" r="1.4" fill="#8fd08f" opacity=".6"/></svg>
<span style="left:31.80px;top:433.90px;color:#3d434b;font-size:15px;letter-spacing:0.538px;">Add(Artifact *)</span>
<span style="left:136.40px;top:433.90px;color:#a08a52;font-size:15px;letter-spacing:-0.872px;">:</span>
<span style="left:142.30px;top:433.90px;color:#a08a52;font-size:15px;letter-spacing:0.256px;">void</span>
<span style="left:174.20px;top:433.90px;color:#8c8c8c;font-size:15px;letter-spacing:-0.100px;">-</span>
<span style="left:181.80px;top:433.90px;color:#8c8c8c;font-size:15px;letter-spacing:0.236px;">CompositeNode</span></div>
<div class="win" style="left:550px;top:291px;width:348px;height:569px;background:#fff;"><div style="position:absolute;left:0px;top:0px;width:348px;height:28px;background:linear-gradient(#53524d,#484743 30%,#3e3d39);border-radius:6px 6px 0 0;box-shadow:inset 0 0 0 1px #383733, inset 0 2px 0 #56554f;"></div>
<svg style="position:absolute;left:10.4px;top:5.6px;" width="37" height="18" viewBox="0 0 37 18"><defs><linearGradient id="gc" x1="0" y1="0" x2="0" y2="1"><stop offset="0" stop-color="#f58a62"/><stop offset="1" stop-color="#df4f1c"/></linearGradient><linearGradient id="gm" x1="0" y1="0" x2="0" y2="1"><stop offset="0" stop-color="#8a8983"/><stop offset="1" stop-color="#64635e"/></linearGradient></defs><circle cx="9" cy="9" r="8.3" fill="#33322e"/><circle cx="9" cy="9" r="7.3" fill="url(#gc)"/><path d="M6.5 6.5 L11.5 11.5 M11.5 6.5 L6.5 11.5" stroke="#42180a" stroke-width="1.15" stroke-linecap="round"/><circle cx="27.2" cy="9" r="8.3" fill="#33322e"/><circle cx="27.2" cy="9" r="7.3" fill="url(#gm)"/><rect x="24.1" y="5.9" width="6.2" height="6.2" fill="#85847e" stroke="#3f3e3a" stroke-width="1"/></svg>
<div style="position:absolute;left:0px;top:28px;width:348px;height:541px;background:#fff;border:1px solid #aaa79f;border-top:none;box-sizing:border-box;"></div>
<div style="position:absolute;left:1px;top:28px;width:345.5px;height:29.3px;background:#fff;"></div>
<div style="position:absolute;left:1px;top:29px;width:345.5px;height:28.3px;background:linear-gradient(#e3e3e3,#dbdbdb);border-radius:5px 5px 0 0;"></div>
<div style="position:absolute;left:1px;top:28px;width:159px;height:29.3px;background:#fff;border-radius:7px 8px 0 0;"></div>
<svg style="position:absolute;left:87.7px;top:7.7px;" width="16" height="23" viewBox="0 0 16 23"><path d="M1.5 1.5 L1.5 17.5 L5.3 14 L8 20.3 L10.8 19.1 L8.1 13 L13.2 13 Z" fill="#fff" stroke="#1a1a1a" stroke-width="1.1" stroke-linejoin="round"/></svg>
<svg style="position:absolute;left:7px;top:35px;" width="16" height="16" viewBox="0 0 16 16"><defs><linearGradient id="fy" x1="0" y1="0" x2="0" y2="1"><stop offset="0" stop-color="#fff3c0"/><stop offset="1" stop-color="#f9c95a"/></linearGradient></defs><path d="M0.5 0.5 H5.8 L8.6 3.3 V11.6 H0.5 Z" fill="#fff" stroke="#a89060" stroke-width=".9"/><path d="M5.8 0.5 V3.3 H8.6" fill="#efe3b8" stroke="#a89060" stroke-width=".7"/><path d="M2 3.5 H4.3 M2 5.5 H4.8 M2 7.5 H3.6 M2 9.5 H3.6" stroke="#7f9fd0" stroke-width=".9"/><path d="M4.4 8 Q4.4 5.9 6 5.9 H7.8 L9 7.3 H13.6 Q14.8 7.3 14.8 8.6 V13.6 Q14.8 14.8 13.6 14.8 H5.6 Q4.4 14.8 4.4 13.6 Z" fill="url(#fy)" stroke="#c88030" stroke-width="1"/></svg>
<span style="left:26.50px;top:33.40px;color:#000;font-size:15px;letter-spacing:0.099px;">Project Explorer</span>
<svg style="position:absolute;left:143px;top:38px;" width="12" height="12" viewBox="0 0 12 12"><path d="M1 2.6 L2.6 1 L6 4.4 L9.4 1 L11 2.6 L7.6 6 L11 9.4 L9.4 11 L6 7.6 L2.6 11 L1 9.4 L4.4 6 Z" fill="#fff" stroke="#2b2b2b" stroke-width="1" stroke-linejoin="round"/></svg>
<svg style="position:absolute;left:213px;top:37px;" width="14" height="14" viewBox="0 0 14 14"><rect x="0.5" y="0.5" width="10" height="9.5" fill="#eaf2fb" stroke="#a9c3e0"/><rect x="2.5" y="2.7" width="10.3" height="10" fill="#f4f9fe" stroke="#8fb0d6"/><path d="M4.4 7.8 H11" stroke="#17498c" stroke-width="1.5"/></svg>
<div style="position:absolute;left:233px;top:31px;width:24px;height:24px;background:#cac9c7;border:1px solid #a09e99;border-radius:4px;box-sizing:border-box;box-shadow:inset 0 1px 2px rgba(0,0,0,.12);"></div>
<svg style="position:absolute;left:237px;top:35px;" width="18" height="18" viewBox="0 0 18 18"><defs><linearGradient id="ya" x1="0" y1="0" x2="0" y2="1"><stop offset="0" stop-color="#fff6d0"/><stop offset="1" stop-color="#f5c95a"/></linearGradient></defs><path d="M1.1 5.5 L6.3 1.1 V4 H13.8 V7 H6.3 V9.9 Z" fill="url(#ya)" stroke="#d4940f" stroke-width="1" stroke-linejoin="round"/><path d="M17 12.5 L11.9 8.2 V11.2 H4.4 V14.1 H11.9 V17 Z" fill="url(#ya)" stroke="#d4940f" stroke-width="1" stroke-linejoin="round"/></svg>
<svg style="position:absolute;left:271.5px;top:37.3px;" width="12" height="7" viewBox="0 0 12 7"><path d="M0.8 0.8 L10.8 0.8 L5.8 5.8 Z" fill="#fff" stroke="#1a1a1a" stroke-width="1.1" stroke-linejoin="round"/></svg>
<div style="position:absolute;left:295px;top:38px;width:10px;height:4px;background:#fff;border:1px solid #111;box-sizing:border-box;"></div>
<div style="position:absolute;left:321px;top:38px;width:10px;height:10px;background:#fff;border:1px solid #111;border-top-width:2px;box-sizing:border-box;"></div>
<div style="position:absolute;left:4px;top:83px;width:327px;height:22px;background:linear-gradient(#f58351,#e96e3d);"></div>
<svg style="position:absolute;left:5px;top:65.5px;" width="8" height="10" viewBox="0 0 8 10"><path d="M0.5 0.5 L7 5 L0.5 9.5 Z" fill="#5a5a5a"/></svg>
<svg style="position:absolute;left:18.8px;top:63px;" width="16" height="13" viewBox="0 0 16 13"><defs><linearGradient id="pf" x1="0" y1="0" x2="0" y2="1"><stop offset="0" stop-color="#c4ddf7"/><stop offset="1" stop-color="#6ea4e2"/></linearGradient></defs><path d="M0.8 10.8 V3.4 L2.8 0.9 H6.8 L7.8 2.6 H10.8 V7" fill="#fce9a8" stroke="#d9c58a" stroke-width=".8" stroke-linejoin="round"/><path d="M0.8 11.7 L5.4 7.2 H15 L10.6 11.7 Z" fill="url(#pf)" stroke="#2a4ab0" stroke-width="1" stroke-linejoin="round"/><path d="M0.8 11.7 V4" stroke="#4a6ac8" stroke-width=".8"/><text x="9.2" y="6.8" font-family='"Liberation Sans",sans-serif' font-weight="bold" font-size="11" fill="#1a5a9a" stroke="#fff" stroke-width="1.4" paint-order="stroke">c</text></svg>
<span style="left:37.00px;top:60.80px;color:#3d434b;font-size:15px;letter-spacing:0.250px;">Composite</span>
<svg style="position:absolute;left:3.2px;top:91px;" width="11" height="8" viewBox="0 0 11 8"><path d="M0.2 0.4 L10.2 0.4 L5.2 7.5 Z" fill="#fbd9cb"/></svg>
<svg style="position:absolute;left:18.8px;top:86px;" width="16" height="13" viewBox="0 0 16 13"><defs><linearGradient id="pf" x1="0" y1="0" x2="0" y2="1"><stop offset="0" stop-color="#c4ddf7"/><stop offset="1" stop-color="#6ea4e2"/></linearGradient></defs><path d="M0.8 10.8 V3.4 L2.8 0.9 H6.8 L7.8 2.6 H10.8 V7" fill="#fce9a8" stroke="#d9c58a" stroke-width=".8" stroke-linejoin="round"/><path d="M0.8 11.7 L5.4 7.2 H15 L10.6 11.7 Z" fill="url(#pf)" stroke="#2a4ab0" stroke-width="1" stroke-linejoin="round"/><path d="M0.8 11.7 V4" stroke="#4a6ac8" stroke-width=".8"/><text x="9.2" y="6.8" font-family='"Liberation Sans",sans-serif' font-weight="bold" font-size="11" fill="#1a5a9a" stroke="#fff" stroke-width="1.4" paint-order="stroke">c</text></svg>
<span style="left:37.00px;top:83.80px;color:#fff;font-size:15px;letter-spacing:-0.300px;">Consumer</span>
<svg style="position:absolute;left:17px;top:111.5px;" width="8" height="10" viewBox="0 0 8 10"><path d="M0.5 0.5 L7 5 L0.5 9.5 Z" fill="#5a5a5a"/></svg>
<svg style="position:absolute;left:30px;top:108.5px;" width="17" height="17" viewBox="0 0 17 17"><text x="2" y="6" font-family='"Liberation Serif",serif' font-size="6.5" fill="#777">10</text><text x="9" y="16" font-family='"Liberation Serif",serif' font-size="6.5" fill="#888">01</text><path d="M10.5 1 L15.5 4 L10.5 7 Z" fill="#3f78c5" stroke="#2a5aa0" stroke-width=".6"/><ellipse cx="6.2" cy="11" rx="3.3" ry="2.6" fill="#6aa0a8" stroke="#2f5f8f" stroke-width=".9"/><path d="M2 7.5 L4 9 M1 11 H3 M2 14.5 L4 13 M10 7.8 L8.3 9.2 M11 11.3 H9.3 M10 14.5 L8.3 13" stroke="#2f5f8f" stroke-width=".9"/></svg>
<span style="left:49.20px;top:106.80px;color:#3d434b;font-size:15px;letter-spacing:-0.172px;">Binaries</span>
<svg style="position:absolute;left:17px;top:134.5px;" width="8" height="10" viewBox="0 0 8 10"><path d="M0.5 0.5 L7 5 L0.5 9.5 Z" fill="#5a5a5a"/></svg>
<svg style="position:absolute;left:30px;top:132px;" width="17" height="17" viewBox="0 0 17 17"><rect x="7" y="1" width="8" height="10" rx="1" fill="#fbf3d4" stroke="#b8902a" stroke-width=".9"/><rect x="4" y="3" width="8" height="10" rx="1" fill="#fbf3d4" stroke="#b8902a" stroke-width=".9"/><rect x="1" y="6" width="8.5" height="10" fill="#fffdf2" stroke="#b8902a" stroke-width=".9"/><text x="2.3" y="14.5" font-family='"Liberation Sans",sans-serif' font-weight="bold" font-size="8.5" fill="#2a5db0">h</text></svg>
<span style="left:49.20px;top:129.80px;color:#3d434b;font-size:15px;letter-spacing:-0.268px;">Includes</span>
<svg style="position:absolute;left:17px;top:157.5px;" width="8" height="10" viewBox="0 0 8 10"><path d="M0.5 0.5 L7 5 L0.5 9.5 Z" fill="#5a5a5a"/></svg>
<svg style="position:absolute;left:30px;top:156.5px;" width="17" height="13" viewBox="0 0 17 13"><path d="M1 12 V2 H5.5 L7 3.8 H12 V5.5" fill="#fbe6a0" stroke="#b8902a" stroke-width="1" stroke-linejoin="round"/><path d="M1 12 L4 5.5 H16 L12.5 12 Z" fill="#fde9a8" stroke="#b8902a" stroke-width="1" stroke-linejoin="round"/></svg>
<span style="left:49.20px;top:152.80px;color:#3d434b;font-size:15px;letter-spacing:-0.351px;">Debug</span>
<svg style="position:absolute;left:15.2px;top:182.5px;" width="11" height="8" viewBox="0 0 11 8"><path d="M0.2 0.4 L10.2 0.4 L5.2 7.5 Z" fill="#5a5a5a"/></svg>
<svg style="position:absolute;left:30px;top:179.5px;" width="17" height="13" viewBox="0 0 17 13"><path d="M1 12 V2 H5.5 L7 3.8 H12 V5.5" fill="#fbe6a0" stroke="#b8902a" stroke-width="1" stroke-linejoin="round"/><path d="M1 12 L4 5.5 H16 L12.5 12 Z" fill="#fde9a8" stroke="#b8902a" stroke-width="1" stroke-linejoin="round"/></svg>
<span style="left:48.70px;top:175.80px;color:#3d434b;font-size:15px;letter-spacing:0.250px;">src</span>
<svg style="position:absolute;left:25.7px;top:205.5px;" width="11" height="8" viewBox="0 0 11 8"><path d="M0.2 0.4 L10.2 0.4 L5.2 7.5 Z" fill="#5a5a5a"/></svg>
<svg style="position:absolute;left:45.3px;top:201.5px;" width="11" height="14" viewBox="0 0 11 14"><path d="M0.5 0.5 H7.3 L10.5 3.7 V13.5 H0.5 Z" fill="#fbfcff" stroke="#b09a50" stroke-width="1"/><path d="M7.3 0.5 V3.7 H10.5" fill="#e9d9a0" stroke="#b09a50" stroke-width=".8"/><text x="4.6" y="11.3" font-family='"Liberation Sans",sans-serif' font-weight="bold" font-size="9.5" fill="#1a4a8a">c</text><rect x="1.9" y="9.6" width="1.7" height="1.7" fill="#1a4a8a"/></svg>
<span style="left:60.80px;top:198.80px;color:#3d434b;font-size:15px;letter-spacing:-0.102px;">Consumer.cpp</span>
<svg style="position:absolute;left:57.3px;top:227.5px;" width="11" height="10" viewBox="0 0 11 10"><rect x="0" y="0" width="5" height="4.2" fill="#1f63a8"/><path d="M7 0 H11 V9.6 H1 V6 H7 Z" fill="#2d76b9"/><path d="M8 5 H10.5 V9 H2 V7 H8Z" fill="#4f93cc" opacity=".5"/></svg>
<span style="left:72.40px;top:221.80px;color:#3d434b;font-size:15px;letter-spacing:0.491px;">arpa/inet.h</span>
<svg style="position:absolute;left:57.3px;top:250.5px;" width="11" height="10" viewBox="0 0 11 10"><rect x="0" y="0" width="5" height="4.2" fill="#1f63a8"/><path d="M7 0 H11 V9.6 H1 V6 H7 Z" fill="#2d76b9"/><path d="M8 5 H10.5 V9 H2 V7 H8Z" fill="#4f93cc" opacity=".5"/></svg>
<span style="left:72.40px;top:244.80px;color:#3d434b;font-size:15px;letter-spacing:0.378px;">errno.h</span>
<svg style="position:absolute;left:57.3px;top:273.5px;" width="11" height="10" viewBox="0 0 11 10"><rect x="0" y="0" width="5" height="4.2" fill="#1f63a8"/><path d="M7 0 H11 V9.6 H1 V6 H7 Z" fill="#2d76b9"/><path d="M8 5 H10.5 V9 H2 V7 H8Z" fill="#4f93cc" opacity=".5"/></svg>
<span style="left:72.40px;top:267.80px;color:#3d434b;font-size:15px;letter-spacing:0.401px;">pthread.h</span>
<svg style="position:absolute;left:57.3px;top:296.5px;" width="11" height="10" viewBox="0 0 11 10"><rect x="0" y="0" width="5" height="4.2" fill="#1f63a8"/><path d="M7 0 H11 V9.6 H1 V6 H7 Z" fill="#2d76b9"/><path d="M8 5 H10.5 V9 H2 V7 H8Z" fill="#4f93cc" opacity=".5"/></svg>
<span style="left:72.40px;top:290.80px;color:#3d434b;font-size:15px;letter-spacing:0.340px;">resolv.h</span>
<div style="position:absolute;left:331px;top:59px;width:13px;height:506px;background:linear-gradient(90deg,#d4d3d1,#e2e1df);border:1px solid #b3b0a9;border-radius:7px;box-sizing:border-box;"></div>
<div style="position:absolute;left:331px;top:59px;width:13px;height:326.5px;background:linear-gradient(90deg,#fbfbfb,#e4e3e1);border:1px solid #a39f97;border-radius:7px;box-sizing:border-box;"></div>
<svg style="position:absolute;left:335px;top:217.5px;" width="6" height="9" viewBox="0 0 6 9"><path d="M1 1.5 H5 M1 4.5 H5 M1 7.5 H5" stroke="#b5b2ab" stroke-width="1"/></svg></div>
<div class="win" style="left:204px;top:607px;width:647px;height:540px;background:transparent;"><div style="position:absolute;left:0px;top:0px;width:647px;height:28px;background:linear-gradient(#53524d,#484743 30%,#3e3d39);border-radius:6px 6px 0 0;box-shadow:inset 0 0 0 1px #383733, inset 0 2px 0 #56554f;"></div>
<svg style="position:absolute;left:10.4px;top:5.6px;" width="37" height="18" viewBox="0 0 37 18"><defs><linearGradient id="gc" x1="0" y1="0" x2="0" y2="1"><stop offset="0" stop-color="#f58a62"/><stop offset="1" stop-color="#df4f1c"/></linearGradient><linearGradient id="gm" x1="0" y1="0" x2="0" y2="1"><stop offset="0" stop-color="#8a8983"/><stop offset="1" stop-color="#64635e"/></linearGradient></defs><circle cx="9" cy="9" r="8.3" fill="#33322e"/><circle cx="9" cy="9" r="7.3" fill="url(#gc)"/><path d="M6.5 6.5 L11.5 11.5 M11.5 6.5 L6.5 11.5" stroke="#42180a" stroke-width="1.15" stroke-linecap="round"/><circle cx="27.2" cy="9" r="8.3" fill="#33322e"/><circle cx="27.2" cy="9" r="7.3" fill="url(#gm)"/><rect x="24.1" y="5.9" width="6.2" height="6.2" fill="#85847e" stroke="#3f3e3a" stroke-width="1"/></svg>
<span style="left:58.10px;top:3.70px;color:#dfdbd2;font-size:15px;font-weight:bold;letter-spacing:0.222px;">Open Element</span>
<div style="position:absolute;left:0px;top:28px;width:647px;height:512px;background:#f2f1f0;border:1px solid #a8a59e;border-top:none;box-sizing:border-box;"></div>
<svg style="position:absolute;left:166.6px;top:8.8px;" width="16" height="23" viewBox="0 0 16 23"><path d="M1.5 1.5 L1.5 17.5 L5.3 14 L8 20.3 L10.8 19.1 L8.1 13 L13.2 13 Z" fill="#fff" stroke="#1a1a1a" stroke-width="1.1" stroke-linejoin="round"/></svg>
<span style="left:13.00px;top:41.00px;color:#3d434b;font-size:15px;letter-spacing:-0.283px;">Choose an element (? = any character, * = any string):</span>
<div style="position:absolute;left:13.3px;top:58px;width:9px;height:1px;background:#3c3c3c;"></div>
<div style="position:absolute;left:13.5px;top:70px;width:620px;height:22.5px;background:linear-gradient(#f1f0ef,#fff 4px);border:1px solid #dc6838;border-radius:4px;box-sizing:border-box;box-shadow:0 0 1px rgba(220,104,56,.6);"></div>
<span style="left:18.70px;top:71.90px;color:#3d434b;font-size:15px;letter-spacing:-0.547px;">check</span>
<div style="position:absolute;left:56.8px;top:74px;width:1px;height:16px;background:#222;"></div>
<span style="left:13.00px;top:101.90px;color:#3d434b;font-size:15px;letter-spacing:0.112px;">Visible element types:</span>
<svg style="position:absolute;left:20px;top:130px;" width="19" height="19" viewBox="0 0 19 19"><defs><linearGradient id="cb" x1="0" y1="0" x2="0" y2="1"><stop offset="0" stop-color="#f79a72"/><stop offset="1" stop-color="#ee6c3b"/></linearGradient></defs><rect x="1.7" y="3.5" width="13.4" height="13.4" rx="2.6" fill="url(#cb)" stroke="#c6572c" stroke-width="1"/><path d="M4 9.9 L7.9 13.6 L16.3 3.6" fill="none" stroke="#6a3a24" stroke-width="2" stroke-linecap="round" stroke-linejoin="round"/></svg>
<svg style="position:absolute;left:41.5px;top:132px;" width="16" height="16" viewBox="0 0 16 16"><circle cx="8" cy="8" r="6.2" fill="#6a4fc0" stroke="#4a33a0" stroke-width="1"/><text x="8" y="11.6" text-anchor="middle" font-family='"Liberation Sans",sans-serif' font-weight="bold" font-size="10" fill="#fff">N</text></svg>
<span style="left:60.50px;top:130.10px;color:#3d434b;font-size:15px;letter-spacing:-0.093px;">Namespace</span>
<div style="position:absolute;left:61.2px;top:147.2px;width:10.5px;height:1px;background:#3c3c3c;"></div>
<svg style="position:absolute;left:20px;top:154px;" width="19" height="19" viewBox="0 0 19 19"><defs><linearGradient id="cb" x1="0" y1="0" x2="0" y2="1"><stop offset="0" stop-color="#f79a72"/><stop offset="1" stop-color="#ee6c3b"/></linearGradient></defs><rect x="1.7" y="3.5" width="13.4" height="13.4" rx="2.6" fill="url(#cb)" stroke="#c6572c" stroke-width="1"/><path d="M4 9.9 L7.9 13.6 L16.3 3.6" fill="none" stroke="#6a3a24" stroke-width="2" stroke-linecap="round" stroke-linejoin="round"/></svg>
<svg style="position:absolute;left:41.5px;top:156px;" width="16" height="16" viewBox="0 0 16 16"><circle cx="8" cy="8" r="6.2" fill="#a5692a" stroke="#85501a" stroke-width="1"/><text x="8" y="11.6" text-anchor="middle" font-family='"Liberation Sans",sans-serif' font-weight="bold" font-size="10" fill="#fff">E</text></svg>
<span style="left:60.50px;top:154.10px;color:#3d434b;font-size:15px;letter-spacing:0.144px;">Enumeration</span>
<div style="position:absolute;left:61.2px;top:171.2px;width:9.5px;height:1px;background:#3c3c3c;"></div>
<svg style="position:absolute;left:20px;top:178px;" width="19" height="19" viewBox="0 0 19 19"><defs><linearGradient id="cb" x1="0" y1="0" x2="0" y2="1"><stop offset="0" stop-color="#f79a72"/><stop offset="1" stop-color="#ee6c3b"/></linearGradient></defs><rect x="1.7" y="3.5" width="13.4" height="13.4" rx="2.6" fill="url(#cb)" stroke="#c6572c" stroke-width="1"/><path d="M4 9.9 L7.9 13.6 L16.3 3.6" fill="none" stroke="#6a3a24" stroke-width="2" stroke-linecap="round" stroke-linejoin="round"/></svg>
<svg style="position:absolute;left:45.2px;top:185.2px;" width="7" height="7" viewBox="0 0 7 7"><rect x="0.9" y="0.9" width="4.6" height="4.6" fill="#fff" stroke="#a5692a" stroke-width="1.5"/></svg>
<span style="left:60.50px;top:178.10px;color:#3d434b;font-size:15px;letter-spacing:0.147px;">Enumerator</span>
<div style="position:absolute;left:106.5px;top:195.2px;width:5.2px;height:1px;background:#3c3c3c;"></div>
<svg style="position:absolute;left:170px;top:130px;" width="19" height="19" viewBox="0 0 19 19"><defs><linearGradient id="cb" x1="0" y1="0" x2="0" y2="1"><stop offset="0" stop-color="#f79a72"/><stop offset="1" stop-color="#ee6c3b"/></linearGradient></defs><rect x="1.7" y="3.5" width="13.4" height="13.4" rx="2.6" fill="url(#cb)" stroke="#c6572c" stroke-width="1"/><path d="M4 9.9 L7.9 13.6 L16.3 3.6" fill="none" stroke="#6a3a24" stroke-width="2" stroke-linecap="round" stroke-linejoin="round"/></svg>
<svg style="position:absolute;left:191.5px;top:132px;" width="16" height="16" viewBox="0 0 16 16"><circle cx="8" cy="8" r="6.2" fill="#2f9a4d" stroke="#1f7a3a" stroke-width="1"/><path d="M10.7 6.1 A3.1 3.1 0 1 0 10.7 9.9" fill="none" stroke="#fff" stroke-width="2.5"/></svg>
<span style="left:210.50px;top:130.10px;color:#3d434b;font-size:15px;letter-spacing:-0.754px;">Class</span>
<div style="position:absolute;left:220.8px;top:147.2px;width:3.4px;height:1px;background:#3c3c3c;"></div>
<svg style="position:absolute;left:170px;top:154px;" width="19" height="19" viewBox="0 0 19 19"><defs><linearGradient id="cb" x1="0" y1="0" x2="0" y2="1"><stop offset="0" stop-color="#f79a72"/><stop offset="1" stop-color="#ee6c3b"/></linearGradient></defs><rect x="1.7" y="3.5" width="13.4" height="13.4" rx="2.6" fill="url(#cb)" stroke="#c6572c" stroke-width="1"/><path d="M4 9.9 L7.9 13.6 L16.3 3.6" fill="none" stroke="#6a3a24" stroke-width="2" stroke-linecap="round" stroke-linejoin="round"/></svg>
<svg style="position:absolute;left:191.5px;top:156px;" width="16" height="16" viewBox="0 0 16 16"><circle cx="8" cy="8" r="6.2" fill="#b9c85a" stroke="#8fa030" stroke-width="1"/><text x="8" y="11.6" text-anchor="middle" font-family='"Liberation Sans",sans-serif' font-weight="bold" font-size="10" fill="#2e8a3a">U</text></svg>
<span style="left:210.50px;top:154.10px;color:#3d434b;font-size:15px;letter-spacing:-0.076px;">Union</span>
<div style="position:absolute;left:211.2px;top:171.2px;width:10.5px;height:1px;background:#3c3c3c;"></div>
<svg style="position:absolute;left:170px;top:178px;" width="19" height="19" viewBox="0 0 19 19"><defs><linearGradient id="cb" x1="0" y1="0" x2="0" y2="1"><stop offset="0" stop-color="#f79a72"/><stop offset="1" stop-color="#ee6c3b"/></linearGradient></defs><rect x="1.7" y="3.5" width="13.4" height="13.4" rx="2.6" fill="url(#cb)" stroke="#c6572c" stroke-width="1"/><path d="M4 9.9 L7.9 13.6 L16.3 3.6" fill="none" stroke="#6a3a24" stroke-width="2" stroke-linecap="round" stroke-linejoin="round"/></svg>
<svg style="position:absolute;left:193.9px;top:183px;" width="11" height="11" viewBox="0 0 11 11"><path d="M4.6 0 L2.4 10.8 M8.6 0 L6.4 10.8" stroke="#1f5f9f" stroke-width="2"/><path d="M1.2 3.7 H10.4 M0.2 7.3 H9.4" stroke="#1f5f9f" stroke-width="1.8"/></svg>
<span style="left:210.50px;top:178.10px;color:#3d434b;font-size:15px;letter-spacing:0.278px;">Macro</span>
<div style="position:absolute;left:224.2px;top:195.2px;width:8px;height:1px;background:#3c3c3c;"></div>
<svg style="position:absolute;left:320px;top:130px;" width="19" height="19" viewBox="0 0 19 19"><defs><linearGradient id="cb" x1="0" y1="0" x2="0" y2="1"><stop offset="0" stop-color="#f79a72"/><stop offset="1" stop-color="#ee6c3b"/></linearGradient></defs><rect x="1.7" y="3.5" width="13.4" height="13.4" rx="2.6" fill="url(#cb)" stroke="#c6572c" stroke-width="1"/><path d="M4 9.9 L7.9 13.6 L16.3 3.6" fill="none" stroke="#6a3a24" stroke-width="2" stroke-linecap="round" stroke-linejoin="round"/></svg>
<svg style="position:absolute;left:341.5px;top:132px;" width="16" height="16" viewBox="0 0 16 16"><circle cx="8" cy="8" r="6.2" fill="#3f9ad8" stroke="#2a78b8" stroke-width="1"/><text x="8" y="11.6" text-anchor="middle" font-family='"Liberation Sans",sans-serif' font-weight="bold" font-size="10" fill="#fff">S</text></svg>
<span style="left:360.50px;top:130.10px;color:#3d434b;font-size:15px;letter-spacing:0.422px;">Struct</span>
<div style="position:absolute;left:361.2px;top:147.2px;width:8.5px;height:1px;background:#3c3c3c;"></div>
<svg style="position:absolute;left:320px;top:154px;" width="19" height="19" viewBox="0 0 19 19"><defs><linearGradient id="cb" x1="0" y1="0" x2="0" y2="1"><stop offset="0" stop-color="#f79a72"/><stop offset="1" stop-color="#ee6c3b"/></linearGradient></defs><rect x="1.7" y="3.5" width="13.4" height="13.4" rx="2.6" fill="url(#cb)" stroke="#c6572c" stroke-width="1"/><path d="M4 9.9 L7.9 13.6 L16.3 3.6" fill="none" stroke="#6a3a24" stroke-width="2" stroke-linecap="round" stroke-linejoin="round"/></svg>
<svg style="position:absolute;left:344.5px;top:159.3px;" width="10" height="10" viewBox="0 0 10 10"><circle cx="5" cy="5" r="3.3" fill="#58a55c" stroke="#2f7a3a" stroke-width="1"/><circle cx="4.3" cy="4.2" r="1.4" fill="#8fd08f" opacity=".6"/></svg>
<span style="left:360.50px;top:154.10px;color:#3d434b;font-size:15px;letter-spacing:0.165px;">Function</span>
<div style="position:absolute;left:361.2px;top:171.2px;width:8px;height:1px;background:#3c3c3c;"></div>
<svg style="position:absolute;left:470px;top:130px;" width="19" height="19" viewBox="0 0 19 19"><defs><linearGradient id="cb" x1="0" y1="0" x2="0" y2="1"><stop offset="0" stop-color="#f79a72"/><stop offset="1" stop-color="#ee6c3b"/></linearGradient></defs><rect x="1.7" y="3.5" width="13.4" height="13.4" rx="2.6" fill="url(#cb)" stroke="#c6572c" stroke-width="1"/><path d="M4 9.9 L7.9 13.6 L16.3 3.6" fill="none" stroke="#6a3a24" stroke-width="2" stroke-linecap="round" stroke-linejoin="round"/></svg>
<svg style="position:absolute;left:491.5px;top:132px;" width="16" height="16" viewBox="0 0 16 16"><circle cx="8" cy="8" r="6.2" fill="#f0b428" stroke="#c98a10" stroke-width="1"/><text x="8" y="11.6" text-anchor="middle" font-family='"Liberation Sans",sans-serif' font-weight="bold" font-size="10" fill="#7a4a00">T</text></svg>
<span style="left:510.50px;top:130.10px;color:#3d434b;font-size:15px;letter-spacing:0.354px;">Typedef</span>
<div style="position:absolute;left:511.2px;top:147.2px;width:8.5px;height:1px;background:#3c3c3c;"></div>
<svg style="position:absolute;left:470px;top:154px;" width="19" height="19" viewBox="0 0 19 19"><defs><linearGradient id="cb" x1="0" y1="0" x2="0" y2="1"><stop offset="0" stop-color="#f79a72"/><stop offset="1" stop-color="#ee6c3b"/></linearGradient></defs><rect x="1.7" y="3.5" width="13.4" height="13.4" rx="2.6" fill="url(#cb)" stroke="#c6572c" stroke-width="1"/><path d="M4 9.9 L7.9 13.6 L16.3 3.6" fill="none" stroke="#6a3a24" stroke-width="2" stroke-linecap="round" stroke-linejoin="round"/></svg>
<svg style="position:absolute;left:494.5px;top:159.3px;" width="10" height="10" viewBox="0 0 10 10"><circle cx="5" cy="5" r="4" fill="#1f66ad"/><path d="M1.9 4.4 A3.1 3.1 0 0 1 8.1 4.4 Z" fill="#7fb0de"/><path d="M1.6 5.2 H8.4" stroke="#1a5a9e" stroke-width="1.1"/><path d="M2.2 6.6 A2.8 2.8 0 0 0 7.8 6.6" fill="none" stroke="#4f8cc8" stroke-width=".9"/></svg>
<span style="left:510.50px;top:154.10px;color:#3d434b;font-size:15px;letter-spacing:0.497px;">Variable</span>
<div style="position:absolute;left:511.2px;top:171.2px;width:9.5px;height:1px;background:#3c3c3c;"></div>
<span style="left:13.00px;top:207.10px;color:#3d434b;font-size:15px;letter-spacing:0.025px;">Matching elements:</span>
<div style="position:absolute;left:13.7px;top:224.2px;width:13px;height:1px;background:#3c3c3c;"></div>
<div style="position:absolute;left:13px;top:234.5px;width:621px;height:201px;background:#fff;border:1px solid #b9b6af;box-sizing:border-box;"></div>
<div style="position:absolute;left:14px;top:235.5px;width:606px;height:22.5px;background:linear-gradient(#f58351,#e96e3d);"></div>
<svg style="position:absolute;left:19.2px;top:241.5px;" width="10" height="10" viewBox="0 0 10 10"><circle cx="5" cy="5" r="4" fill="#1f66ad"/><path d="M1.9 4.4 A3.1 3.1 0 0 1 8.1 4.4 Z" fill="#7fb0de"/><path d="M1.6 5.2 H8.4" stroke="#1a5a9e" stroke-width="1.1"/><path d="M2.2 6.6 A2.8 2.8 0 0 0 7.8 6.6" fill="none" stroke="#4f8cc8" stroke-width=".9"/></svg>
<span style="left:35.30px;top:236.60px;color:#fff;font-size:15px;letter-spacing:-0.197px;">check</span>
<svg style="position:absolute;left:19.2px;top:264.5px;" width="10" height="10" viewBox="0 0 10 10"><circle cx="5" cy="5" r="3.2" fill="#58a55c" stroke="#2f7a3a" stroke-width="1"/><circle cx="4.3" cy="4.2" r="1.4" fill="#8fd08f" opacity=".6"/></svg>
<span style="left:35.30px;top:259.60px;color:#3d434b;font-size:15px;letter-spacing:-0.155px;">check(?, const char *, int)</span>
<svg style="position:absolute;left:19.2px;top:287.5px;" width="10" height="10" viewBox="0 0 10 10"><circle cx="5" cy="5" r="3.2" fill="#58a55c" stroke="#2f7a3a" stroke-width="1"/><circle cx="4.3" cy="4.2" r="1.4" fill="#8fd08f" opacity=".6"/></svg>
<span style="left:35.30px;top:282.60px;color:#3d434b;font-size:15px;letter-spacing:-0.302px;">check(C *)</span>
<svg style="position:absolute;left:18.9px;top:310.3px;" width="11" height="11" viewBox="0 0 11 11"><path d="M4.6 0 L2.4 10.8 M8.6 0 L6.4 10.8" stroke="#1f5f9f" stroke-width="2"/><path d="M1.2 3.7 H10.4 M0.2 7.3 H9.4" stroke="#1f5f9f" stroke-width="1.8"/></svg>
<span style="left:35.30px;top:305.60px;color:#3d434b;font-size:15px;letter-spacing:-0.703px;">CHECK(cond)</span>
<svg style="position:absolute;left:19.2px;top:333.5px;" width="10" height="10" viewBox="0 0 10 10"><circle cx="5" cy="5" r="3.2" fill="#58a55c" stroke="#2f7a3a" stroke-width="1"/><circle cx="4.3" cy="4.2" r="1.4" fill="#8fd08f" opacity=".6"/></svg>
<span style="left:35.30px;top:328.60px;color:#3d434b;font-size:15px;letter-spacing:0.005px;">check(const char *, bool)</span>
<svg style="position:absolute;left:19.2px;top:356.5px;" width="10" height="10" viewBox="0 0 10 10"><circle cx="5" cy="5" r="3.2" fill="#58a55c" stroke="#2f7a3a" stroke-width="1"/><circle cx="4.3" cy="4.2" r="1.4" fill="#8fd08f" opacity=".6"/></svg>
<span style="left:35.30px;top:351.60px;color:#3d434b;font-size:15px;letter-spacing:-0.012px;">check(const Symbol_table *, const Layout *)</span>
<svg style="position:absolute;left:19.2px;top:379.5px;" width="10" height="10" viewBox="0 0 10 10"><circle cx="5" cy="5" r="3.2" fill="#58a55c" stroke="#2f7a3a" stroke-width="1"/><circle cx="4.3" cy="4.2" r="1.4" fill="#8fd08f" opacity=".6"/></svg>
<span style="left:35.30px;top:374.60px;color:#3d434b;font-size:15px;letter-spacing:-0.021px;">check(void *, long int, const char *)</span>
<svg style="position:absolute;left:18.9px;top:402.3px;" width="11" height="11" viewBox="0 0 11 11"><path d="M4.6 0 L2.4 10.8 M8.6 0 L6.4 10.8" stroke="#1f5f9f" stroke-width="2"/><path d="M1.2 3.7 H10.4 M0.2 7.3 H9.4" stroke="#1f5f9f" stroke-width="1.8"/></svg>
<span style="left:35.30px;top:397.60px;color:#3d434b;font-size:15px;letter-spacing:-1.000px;">CHECK(x)</span>
<div style="position:absolute;left:620.5px;top:235.5px;width:12.5px;height:187px;background:linear-gradient(90deg,#d4d3d1,#e2e1df);border:1px solid #b3b0a9;border-radius:7px;box-sizing:border-box;"></div>
<div style="position:absolute;left:620.5px;top:235.5px;width:12.5px;height:29.5px;background:linear-gradient(90deg,#fbfbfb,#e4e3e1);border:1px solid #a39f97;border-radius:7px;box-sizing:border-box;"></div>
<svg style="position:absolute;left:624.5px;top:243px;" width="5" height="8" viewBox="0 0 5 8"><path d="M0.5 1 H4.5 M0.5 3.5 H4.5 M0.5 6 H4.5" stroke="#b5b2ab" stroke-width="1"/></svg>
<div style="position:absolute;left:14px;top:422.5px;width:606px;height:12px;background:linear-gradient(#d4d3d1,#e2e1df);border:1px solid #b3b0a9;border-radius:7px;box-sizing:border-box;"></div>
<div style="position:absolute;left:14px;top:422.5px;width:417px;height:12px;background:linear-gradient(#fbfbfb,#e4e3e1);border:1px solid #a39f97;border-radius:7px;box-sizing:border-box;"></div>
<svg style="position:absolute;left:217.5px;top:426px;" width="9" height="5" viewBox="0 0 9 5"><path d="M1.5 0.5 V4.5 M4.5 0.5 V4.5 M7.5 0.5 V4.5" stroke="#b5b2ab" stroke-width="1"/></svg>
<span style="left:13.00px;top:444.10px;color:#3d434b;font-size:15px;letter-spacing:0.025px;">Qualified name and location:</span>
<div style="position:absolute;left:13px;top:471.5px;width:621px;height:48px;background:#fff;border:1px solid #b9b6af;box-sizing:border-box;"></div>
<div style="position:absolute;left:14px;top:472.5px;width:619px;height:22.5px;background:linear-gradient(#f58351,#e96e3d);"></div>
<svg style="position:absolute;left:19.2px;top:478.5px;" width="10" height="10" viewBox="0 0 10 10"><circle cx="5" cy="5" r="4" fill="#1f66ad"/><path d="M1.9 4.4 A3.1 3.1 0 0 1 8.1 4.4 Z" fill="#7fb0de"/><path d="M1.6 5.2 H8.4" stroke="#1a5a9e" stroke-width="1.1"/><path d="M2.2 6.6 A2.8 2.8 0 0 0 7.8 6.6" fill="none" stroke="#4f8cc8" stroke-width=".9"/></svg>
<span style="left:35.40px;top:473.60px;color:#fff;font-size:15px;letter-spacing:0.255px;">IT_rl::check - /gdb/build/binutils/sysroff.h</span>
<svg style="position:absolute;left:19.2px;top:501.5px;" width="10" height="10" viewBox="0 0 10 10"><circle cx="5" cy="5" r="4" fill="#1f66ad"/><path d="M1.9 4.4 A3.1 3.1 0 0 1 8.1 4.4 Z" fill="#7fb0de"/><path d="M1.6 5.2 H8.4" stroke="#1a5a9e" stroke-width="1.1"/><path d="M2.2 6.6 A2.8 2.8 0 0 0 7.8 6.6" fill="none" stroke="#4f8cc8" stroke-width=".9"/></svg>
<span style="left:35.40px;top:496.60px;color:#3d434b;font-size:15px;letter-spacing:0.255px;">tcphdr::check - /usr/include/netinet/tcp.h</span></div>
</body></html>
